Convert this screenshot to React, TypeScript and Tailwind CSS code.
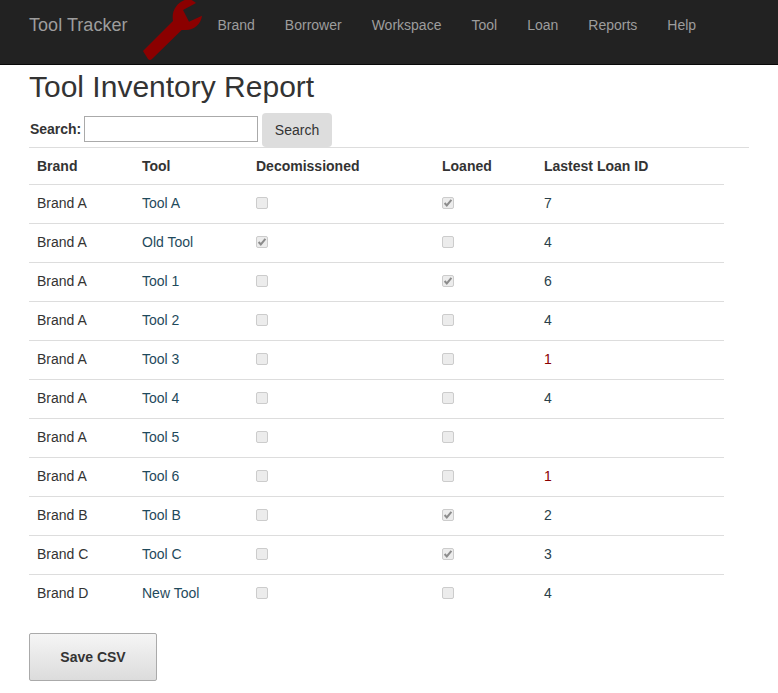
const nav = ["Brand", "Borrower", "Workspace", "Tool", "Loan", "Reports", "Help"];
const rows: [string, string, boolean, boolean, string, boolean][] = [
  ["Brand A", "Tool A", false, true, "7", false],
  ["Brand A", "Old Tool", true, false, "4", false],
  ["Brand A", "Tool 1", false, true, "6", false],
  ["Brand A", "Tool 2", false, false, "4", false],
  ["Brand A", "Tool 3", false, false, "1", true],
  ["Brand A", "Tool 4", false, false, "4", false],
  ["Brand A", "Tool 5", false, false, "", false],
  ["Brand A", "Tool 6", false, false, "1", true],
  ["Brand B", "Tool B", false, true, "2", false],
  ["Brand C", "Tool C", false, true, "3", false],
  ["Brand D", "New Tool", false, false, "4", false],
];

function Wrench() {
  return (
    <svg className="absolute left-[140px] top-0" width="66" height="62" viewBox="0 0 66 62">
      <path
        d="M3 51 L33 21 C31 10 38 1 48 -1 C51 -1 53 1 56 3 L43 10 L49 21.7 L62 15.7 C61 24 54 30 46 30 C44.5 30 43 30 41.7 30 L12 59 Q10 61 8 59 Z"
        fill="#8b0000"
      />
    </svg>
  );
}

function Check({ checked }: { checked: boolean }) {
  return (
    <span className="relative mb-[2px] block h-[12px] w-[12px]">
      <input
        type="checkbox"
        disabled
        defaultChecked={checked}
        className="m-0 block h-[12px] w-[12px] appearance-none rounded-[2px] border border-[#ccc] bg-[#ececec]"
      />
      {checked && (
        <svg className="absolute left-0 top-0" width="12" height="12" viewBox="0 0 12 12">
          <path d="M2.6 6 L4.8 8.4 L9.4 2.8" fill="none" stroke="#8c8c8c" strokeWidth="2" />
        </svg>
      )}
    </span>
  );
}

export default function App() {
  return (
    <div className="min-h-[693px] bg-white font-['Liberation_Sans',Arial,sans-serif] text-[14px] text-[#333]">
      <nav className="relative flex h-[65px] items-start overflow-hidden border-b border-[#080808] bg-[#222] pl-[29px]">
        <span className="mt-[15px] w-[173px] text-[18px] leading-[20px] tracking-[0.05px] text-[#9d9d9d]">Tool Tracker</span>
        <Wrench />
        <div className="mt-[15px] ml-[15.5px] flex gap-[30px] leading-[20px] text-[#9d9d9d]">
          {nav.map((n) => (
            <span key={n}>{n}</span>
          ))}
        </div>
      </nav>
      <main className="px-[29px]">
        <h1 className="mt-[5px] text-[30px] leading-[33px] font-medium">Tool Inventory Report</h1>
        <div className="mt-[8px] flex h-[37px] w-[720px] items-start border-b border-[#ddd] pl-[1px]">
          <label className="mt-[10px] w-[51px] text-[14px] leading-[16px] font-bold tracking-[-0.05px]">Search:</label>
          <input className="mt-[5px] ml-[3px] h-[26px] w-[174px] border border-[#aaa] bg-white" />
          <button className="mt-[2px] ml-[4px] h-[34px] w-[70px] rounded-[4px] bg-[#ddd] text-[14px] text-[#333]">Search</button>
        </div>
        <table className="w-[695px] table-fixed border-collapse">
          <thead>
            <tr className="h-[36px] border-b border-[#ddd] text-left">
              <th className="w-[105px] pt-[2px] pl-[8px] font-bold">Brand</th>
              <th className="w-[114px] pt-[2px] pl-[8px] font-bold">Tool</th>
              <th className="w-[186px] pt-[2px] pl-[8px] font-bold">Decomissioned</th>
              <th className="w-[102px] pt-[2px] pl-[8px] font-bold">Loaned</th>
              <th className="pt-[2px] pl-[8px] font-bold">Lastest Loan ID</th>
            </tr>
          </thead>
          <tbody>
            {rows.map((r, i) => (
              <tr key={i} className={`h-[39px] ${i < rows.length - 1 ? "border-b border-[#ddd]" : ""}`}>
                <td className="pl-[8px]">{r[0]}</td>
                <td className="pl-[8px] text-[#1f4a5c]">{r[1]}</td>
                <td className="pl-[8px]">
                  <Check checked={r[2]} />
                </td>
                <td className="pl-[8px]">
                  <Check checked={r[3]} />
                </td>
                <td className={`pl-[8px] ${r[5] ? "text-[#8b0000]" : "text-[#2a3f4a]"}`}>{r[4]}</td>
              </tr>
            ))}
          </tbody>
        </table>
        <button className="mt-[20px] h-[48px] w-[128px] rounded-[2px] border border-[#aaa] bg-gradient-to-b from-[#f5f5f5] to-[#dcdcdc] text-[14px] font-bold text-[#333]">
          Save CSV
        </button>
      </main>
    </div>
  );
}
